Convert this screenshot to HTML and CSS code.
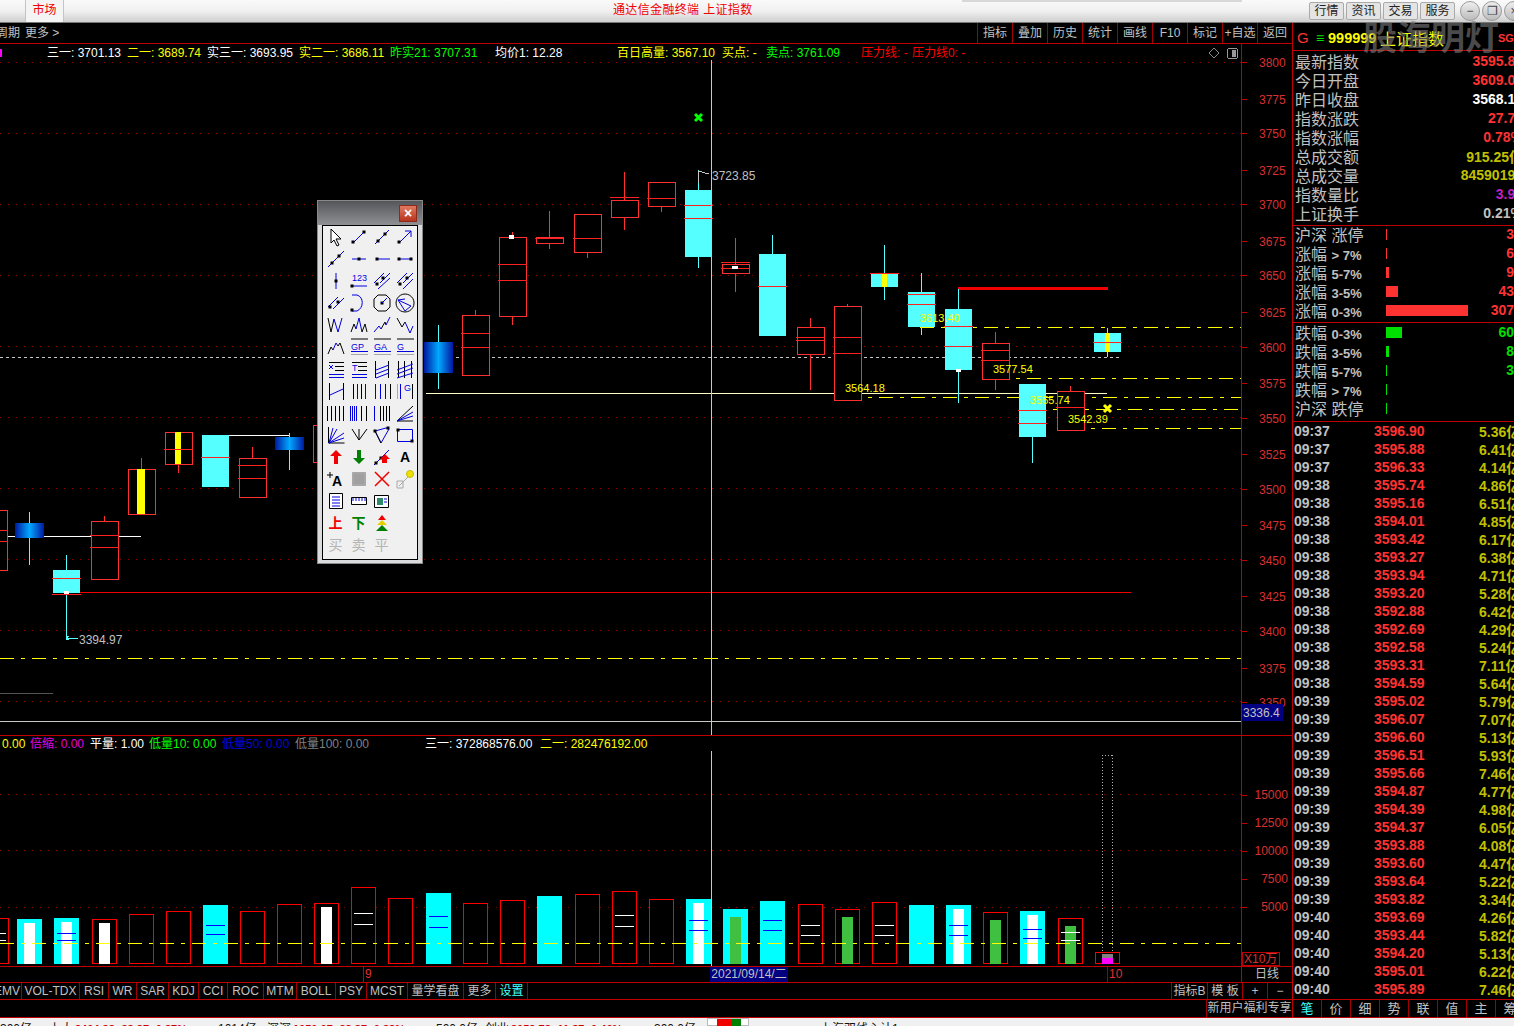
FILE: index.html
```html
<!DOCTYPE html>
<html lang="zh-CN">
<head>
    <meta charset="UTF-8">
    <title>通达信金融终端 上证指数</title>
    <link rel="stylesheet" href="styles.css">
</head>
<body>

    <header class="titlebar">
        <div class="market-tab">市场</div>
        <div class="app-title">通达信金融终端 上证指数</div>
        <div class="title-right">
            <span class="menu-btn">行情</span>
            <span class="menu-btn">资讯</span>
            <span class="menu-btn">交易</span>
            <span class="menu-btn">服务</span>
            <span class="win-btn">−</span>
            <span class="win-btn">❐</span>
            <span class="win-btn">×</span>
        </div>
    </header>

    <div class="workspace">
        <main class="left-col">
            <div class="toolbar">
                <div class="toolbar-left"><span>周期</span><span>更多 &gt;</span></div>
                <div class="toolbar-right">
                    <span>指标</span><span>叠加</span><span>历史</span><span>统计</span><span>画线</span>
                    <span>F10</span><span>标记</span><span>+自选</span><span>返回</span>
                </div>
            </div>

            <div class="chart-wrap">
                <svg class="chart" id="price-chart" viewBox="0 44 1292 691" width="1292" height="691"></svg>
                <div class="toolbox">
                    <div class="toolbox-title"><span class="toolbox-close">×</span></div>
                    <div class="toolbox-grid" id="toolbox-grid"></div>
                </div>
            </div>

            <svg class="chart" id="volume-chart" viewBox="0 735 1292 231" width="1292" height="231"></svg>

            <div class="date-row">
                <span class="seg seg-nine">9</span>
                <span class="seg seg-date">2021/09/14/二</span>
                <span class="seg seg-gap"></span>
                <span class="seg seg-ten">10</span>
                <span class="seg seg-period">日线</span>
            </div>

            <div class="tab-row">
                <div class="tabs">
                    <span>EMV</span><span>VOL-TDX</span><span>RSI</span><span>WR</span><span>SAR</span>
                    <span>KDJ</span><span>CCI</span><span>ROC</span><span>MTM</span><span>BOLL</span><span>PSY</span>
                    <span>MCST</span><span>量学看盘</span><span>更多</span><span class="tab-active">设置</span>
                </div>
                <div class="tabs-right">
                    <span class="tr-idx">指标B</span><span class="tr-tpl">模 板</span><span class="tr-pm">+</span><span class="tr-pm">−</span>
                </div>
            </div>

            <div class="promo-row"><span>新用户福利专享</span></div>
        </main>

        <aside class="right-col">
            <div class="quote-head">
                <span class="qh-g">G</span>
                <span class="qh-menu">≡</span>
                <span class="qh-code">999999</span>
                <span class="qh-name">上证指数</span>
                <span class="qh-sg">SG2</span>
            </div>

            <div class="quote-list">
                <div class="q-row"><span>最新指数</span><b class="red">3595.84</b></div>
                <div class="q-row"><span>今日开盘</span><b class="red">3609.09</b></div>
                <div class="q-row"><span>昨日收盘</span><b class="white">3568.18</b></div>
                <div class="q-row"><span>指数涨跌</span><b class="red">27.70</b></div>
                <div class="q-row"><span>指数涨幅</span><b class="red">0.78%</b></div>
                <div class="q-row"><span>总成交额</span><b class="olive">915.25亿</b></div>
                <div class="q-row"><span>总成交量</span><b class="olive">84590195</b></div>
                <div class="q-row"><span>指数量比</span><b class="purple">3.91</b></div>
                <div class="q-row"><span>上证换手</span><b class="grey">0.21%</b></div>
            </div>

            <div class="stat-list">
                <div class="s-row"><span class="s-name">沪深 涨停</span><i class="s-bar up" style="width:1px"></i><b class="red">3</b></div>
                <div class="s-row"><span class="s-name">涨幅 <em>&gt; 7%</em></span><i class="s-bar up" style="width:1px"></i><b class="red">6</b></div>
                <div class="s-row"><span class="s-name">涨幅 <em>5-7%</em></span><i class="s-bar up" style="width:3px"></i><b class="red">9</b></div>
                <div class="s-row"><span class="s-name">涨幅 <em>3-5%</em></span><i class="s-bar up" style="width:12px"></i><b class="red">43</b></div>
                <div class="s-row"><span class="s-name">涨幅 <em>0-3%</em></span><i class="s-bar up" style="width:82px"></i><b class="red">307</b></div>
            </div>

            <div class="stat-list">
                <div class="s-row"><span class="s-name">跌幅 <em>0-3%</em></span><i class="s-bar down" style="width:16px"></i><b class="green">60</b></div>
                <div class="s-row"><span class="s-name">跌幅 <em>3-5%</em></span><i class="s-bar down" style="width:3px"></i><b class="green">8</b></div>
                <div class="s-row"><span class="s-name">跌幅 <em>5-7%</em></span><i class="s-bar down" style="width:1px"></i><b class="green">3</b></div>
                <div class="s-row"><span class="s-name">跌幅 <em>&gt; 7%</em></span><i class="s-bar down" style="width:1px"></i><b class="green"></b></div>
                <div class="s-row"><span class="s-name">沪深 跌停</span><i class="s-bar down" style="width:1px"></i><b class="green"></b></div>
            </div>

            <div class="tick-list" id="tick-list"></div>

            <div class="side-tabs">
                <span class="side-active">笔</span><span>价</span><span>细</span><span>势</span>
                <span>联</span><span>值</span><span>主</span><span>筹</span>
            </div>
        </aside>
    </div>

    <footer class="statusbar">
        <span class="st-a">300亿</span><span class="st-b">上大</span><span class="st-red">3404.88 -28.87 -0.87%</span>
        <span class="st-a">1014亿</span><span class="st-b">深深</span><span class="st-red">1050.07 -28.87 -0.88%</span>
        <span class="st-a">500.0亿</span><span class="st-b">创业</span><span class="st-red">3053.78 -11.87 -0.40%</span>
        <span class="st-a">300.0亿</span>
        <span class="st-flags"><i class="f-red"></i><i class="f-green"></i></span>
        <span class="st-msg">上海双线心计1</span>
        <span class="st-icons"><i></i><i class="st-y"></i><i></i><i class="st-r"></i></span>
    </footer>

    <div class="watermark">股海明灯</div>

    <script src="script.js"></script>
</body>
</html>
```

FILE: styles.css
```css
* { margin: 0; padding: 0; box-sizing: border-box; }
html, body { width: 1514px; height: 1026px; overflow: hidden; background: #000; }
body {
    font-family: "Liberation Sans", "Noto Sans CJK SC", sans-serif;
    font-size: 12px; color: #c0c0c0; position: relative;
    display: flex; flex-direction: column;
}

/* title bar */
.titlebar {
    height: 23px; flex: none; display: flex; align-items: center; position: relative;
    background: linear-gradient(#fafafa, #f0f0f0 50%, #cfcfcf);
    border-bottom: 1px solid #777; overflow: hidden;
}
.titlebar::before {
    content: ''; position: absolute; top: 0; left: 962px; width: 280px; height: 2px;
    background: #d8d8d8;
}
.market-tab {
    width: 39px; height: 22px; margin-left: 25px; line-height: 21px; text-align: center;
    color: #f00000; background: #f4f4f4; font-size: 12px;
    border-left: 1px solid #c4c4c4; border-right: 1px solid #c4c4c4;
}
.app-title { position: absolute; left: 613px; top: 3px; color: #f00000; line-height: 15px; letter-spacing: 0.35px; }
.title-right { margin-left: auto; display: flex; align-items: center; gap: 2px; margin-right: -10px; }
.menu-btn {
    width: 35px; height: 18px; line-height: 16px; text-align: center; color: #222;
    background: #e4e4e4; border: 1px solid #aaa; border-radius: 2px;
}
.win-btn {
    width: 20px; height: 20px; border-radius: 50%; line-height: 18px; text-align: center;
    border: 1px solid #999; background: linear-gradient(#eee, #bbb); color: #444; font-size: 12px;
}
.win-btn:nth-child(5) { margin-left: 3px; }

.workspace { flex: none; height: 995px; display: flex; }
.left-col { width: 1292px; flex: none; display: flex; flex-direction: column; }
.right-col {
    width: 222px; flex: none; border-left: 1px solid #c00000;
    display: flex; flex-direction: column; overflow: hidden;
}

/* toolbar */
.toolbar {
    height: 21px; flex: none; display: flex; justify-content: space-between;
    border-bottom: 1px solid #c00000;
}
.toolbar-left { display: flex; gap: 5px; line-height: 20px; margin-left: -4px; }
.toolbar-right { display: flex; }
.toolbar-right span {
    width: 35px; text-align: center; line-height: 20px; border-left: 1px solid #a00000;
}

/* charts */
.chart { display: block; flex: none; shape-rendering: crispEdges; }
.chart text { font-family: "Liberation Sans", "Noto Sans CJK SC", sans-serif; font-size: 12px; shape-rendering: auto; }
.chart text.small { font-size: 11px; }
.chart-wrap { position: relative; height: 691px; flex: none; }

/* drawing tools palette */
.toolbox {
    position: absolute; left: 317px; top: 156px; width: 106px; height: 364px;
    background: #d9dbdd; border: 1px solid #8a8a8a; padding: 0 4px 3px;
    display: flex; flex-direction: column;
}
.toolbox-title {
    height: 24px; margin: 0 -4px; flex: none; position: relative;
    background: linear-gradient(#54565a, #8f9194);
}
.toolbox-close {
    position: absolute; right: 5px; top: 4px; width: 18px; height: 17px;
    background: linear-gradient(#e07a60, #b8331e); border: 1px solid #8c2a1a;
    color: #fff; font-size: 14px; font-weight: bold; line-height: 14px; text-align: center;
}
.toolbox-grid {
    flex: 1; background: #f0f0f0; border: 1px solid #000; display: grid;
    grid-template-columns: repeat(4, 23px); grid-auto-rows: 22px;
    justify-content: center; justify-items: center; align-items: center;
}
.tool { width: 20px; height: 20px; display: block; overflow: visible; }
.tool .b { stroke: #0000e0; fill: none; }
.tool .k { stroke: #000; fill: none; }
.tool .n { stroke: #a8a8a8; fill: none; }
.tool .w { stroke: #000; fill: #fff; }
.tool .d { fill: #000; }
.tool text { font-family: "Liberation Sans", sans-serif; font-size: 9px; fill: #0000e0; }
.tool text.big { font-size: 14px; font-weight: bold; fill: #000; }
.tool-char { font-size: 14px; line-height: 20px; color: #b4b4b4; }
.tool-char.c-red { color: #f00000; font-weight: bold; }
.tool-char.c-green { color: #008000; font-weight: bold; }

/* date axis row */
.date-row { height: 16px; flex: none; display: flex; border-top: 1px solid #c00000; line-height: 15px; color: #e03030; }
.seg { display: block; height: 15px; }
.seg-nine { margin-left: 363px; width: 347px; border-left: 1px solid #c00000; padding-left: 1px; }
.seg-date { width: 78px; background: #000080; color: #c0c0c0; white-space: nowrap; text-align: center; }
.seg-gap { width: 319px; }
.seg-ten { width: 134px; border-left: 1px solid #a00000; padding-left: 1px; }
.seg-period { width: 51px; border-left: 1px solid #c00000; color: #c0c0c0; text-align: center; }

/* formula tabs */
.tab-row {
    height: 17px; flex: none; display: flex; justify-content: space-between;
    border-top: 1px solid #c00000; line-height: 16px;
}
.tabs {
    display: grid; margin-left: -7px;
    grid-template-columns: 29px 58px 29px 28px 32px 30px 29px 36px 33px 39px 31px 41px 56px 32px 32px;
}
.tabs span { text-align: center; border-right: 1px solid #a00000; white-space: nowrap; }
.tabs .tab-active { color: #40ffff; }
.tabs-right { display: flex; }
.tabs-right span { text-align: center; border-left: 1px solid #a00000; }
.tr-idx { width: 36px; }
.tr-tpl { width: 35px; }
.tr-pm { width: 25px; }

.promo-row { height: 19px; flex: none; border-top: 1px solid #c00000; border-bottom: 1px solid #c00000; text-align: right; line-height: 17px; }
.promo-row span { display: inline-block; width: 86px; text-align: center; border-left: 1px solid #a00000; }

/* quote panel */
.quote-head {
    height: 28px; flex: none; display: flex; align-items: center;
    padding-top: 2px; border-bottom: 1px solid #c00000; white-space: nowrap;
}
.quote-head span { flex: none; }
.qh-g { color: #ff3232; font-size: 15px; margin-left: 4px; width: 19px; }
.qh-menu { color: #00e000; width: 12px; font-size: 14px; }
.qh-code { color: #ffff00; font-weight: bold; font-size: 14.5px; width: 52px; }
.qh-name { color: #ffff00; font-size: 16px; }
.qh-sg { color: #ff3232; font-weight: bold; font-size: 11px; margin-left: 54px; }

.quote-list { flex: none; border-bottom: 1px solid #c00000; padding-bottom: 3px; }
.q-row, .s-row { height: 19px; display: flex; align-items: center; font-size: 16px; padding-left: 2px; white-space: nowrap; }
.q-row { justify-content: space-between; margin-right: -9px; }
.s-row { padding-bottom: 3px; }
.q-row b, .s-row b, .tick b { font-size: 14px; }
.stat-list { flex: none; border-bottom: 1px solid #c00000; height: 97px; }
.stat-list + .stat-list { height: 99px; padding-top: 1px; }
.s-name { width: 91px; flex: none; }
.s-name em { font-style: normal; font-weight: bold; font-size: 13px; }
.s-bar { display: block; height: 11px; flex: none; }
.s-bar.up { background: #ff3232; }
.s-bar.down { background: #00e000; }
.s-row b { margin-left: auto; }

.red { color: #ff3232; }
.white { color: #fff; }
.olive { color: #c0c000; }
.purple { color: #c020c0; }
.grey { color: #c0c0c0; }
.green { color: #00e000; }

.tick-list { flex: none; height: 577px; overflow: hidden; }
.tick { height: 18px; display: flex; align-items: center; white-space: nowrap; padding: 0 0 1px 1px; }
.tick > * { flex: none; }
.tick .t-time { width: 80px; font-weight: bold; font-size: 14px; color: #c0c0c0; }
.tick .t-price { width: 105px; color: #ff3232; }
.tick .t-vol { color: #c0c000; }

.side-tabs { height: 19px; flex: none; display: flex; border-bottom: 1px solid #c00000; border-top: 1px solid #c00000; }
.side-tabs span { width: 29px; flex: none; text-align: center; line-height: 17px; border-right: 1px solid #a00000; font-size: 13px; }
.side-tabs .side-active { color: #40ffff; }

/* status bar, cut by the window edge */
.statusbar {
    height: 8px; flex: none; background: #f0f0f0; color: #111; overflow: hidden;
    display: flex; align-items: flex-start; line-height: 15px; white-space: nowrap;
    position: relative; padding-top: 4px;
}
.statusbar span { display: block; flex: none; }
.st-a { width: 49px; }
.st-b { width: 26px; }
.st-red { width: 143px; color: #d00000; font-weight: bold; font-size: 11px; }
.st-flags { position: absolute; left: 707px; top: 0; width: 42px; height: 8px; background: #fff; border: 1px solid #bbb; padding-left: 9px; }
.st-flags i { display: inline-block; height: 8px; vertical-align: top; }
.f-red { width: 14px; background: #f00000; }
.f-green { width: 10px; background: #008000; }
.st-msg { position: absolute; left: 820px; top: 4px; }
.st-icons { position: absolute; right: 6px; top: 2px; display: flex; gap: 8px; }
.st-icons i { width: 13px; height: 8px; background: #777; }
.st-icons .st-y { background: #e0c000; border-radius: 50%; }
.st-icons .st-r { background: #d00000; }

.watermark {
    position: absolute; left: 1363px; top: 11px; font-size: 34px; font-weight: bold;
    color: rgba(125, 125, 125, 0.6); pointer-events: none; white-space: nowrap;
}
```

FILE: script.js
```js
// price chart, volume bars, tick list and palette icons are drawn from the data below

const RED = "#ff3030", CYAN = "#55ffff", YEL = "#ffff00";

function line(x1, y1, x2, y2, color, extra) {
    return `<line x1="${x1}" y1="${y1}" x2="${x2}" y2="${y2}" stroke="${color}" ${extra || ""}/>`;
}
function rect(x, y, w, h, fill, stroke) {
    return `<rect x="${x}" y="${y}" width="${w}" height="${h}" fill="${fill}" stroke="${stroke || "none"}"/>`;
}
function text(x, y, s, color, cls) {
    return `<text x="${x}" y="${y}" fill="${color}" class="${cls || ""}">${s}</text>`;
}

// ---------- price chart ----------
let price = `<defs><linearGradient id="blue-bar"><stop offset="0" stop-color="#0018a0"/><stop offset="0.5" stop-color="#00a8ff"/><stop offset="1" stop-color="#0018a0"/></linearGradient></defs>`;

// grid
[62, 133, 204, 275, 346, 417, 488, 559, 630, 701].forEach(y => {
    price += line(0, y + 0.5, 1242, y + 0.5, "#900000", 'stroke-dasharray="1 7"');
});

// long lines under the candles
price += line(0, 357.5, 1120, 357.5, "#c8c8c8", 'stroke-dasharray="3 3"');
price += line(426, 393.5, 1107, 393.5, "#ffffc8");
price += line(53, 592.5, 1131, 592.5, "#f00000");
price += line(958, 288, 1108, 288, "#f00000", 'stroke-width="3"');
price += line(0, 536.5, 141, 536.5, "#ffffff");
price += line(215, 435.5, 290, 435.5, "#ffffff");
price += line(0, 693.5, 53, 693.5, "#555555");
const dashDot = 'stroke-dasharray="14 7 4 7"';
[[920, 327], [995, 378], [847, 397], [1032, 409], [1070, 428], [0, 658]].forEach(d => {
    price += line(d[0], d[1] + 0.5, 1242, d[1] + 0.5, YEL, dashDot);
});

// x, wick top, wick bottom, body top, body bottom, kind, cross lines, centre width
const candles = [
    [-7, 500, 570, 510, 570, "r", [530, 541]],
    [29, 512, 565, 523, 538, "b", []],
    [66, 555, 640, 570, 593, "c", [578, 594]],
    [104, 516, 579, 521, 579, "r", [535, 547]],
    [141, 458, 514, 469, 514, "r", [], 8],
    [178, 432, 473, 432, 464, "r", [449], 6],
    [215, 435, 487, 435, 487, "c", [457]],
    [252, 447, 497, 458, 497, "r", [465, 478]],
    [289, 433, 470, 437, 450, "b", []],
    [326, 425, 462, 425, 462, "r", []],
    [438, 325, 389, 342, 373, "b", []],
    [475, 310, 375, 315, 375, "r", [333, 347]],
    [512, 232, 325, 237, 316, "r", [264, 280]],
    [549, 211, 249, 237, 243, "r", [238]],
    [587, 214, 258, 214, 252, "r", [238]],
    [624, 172, 230, 200, 217, "r", [197]],
    [661, 182, 212, 182, 206, "r", [198]],
    [698, 170, 268, 190, 257, "c", [205, 218]],
    [735, 238, 292, 264, 273, "r", [262, 268]],
    [772, 235, 336, 254, 336, "c", [286]],
    [810, 318, 390, 327, 354, "r", [337, 340]],
    [847, 304, 400, 306, 400, "r", [337, 353]],
    [884, 245, 300, 273, 287, "c", [273], 5],
    [921, 273, 335, 292, 327, "c", [294, 304]],
    [958, 289, 403, 309, 370, "c", [326, 346]],
    [995, 332, 390, 343, 379, "r", [350, 360]],
    [1032, 437, 463, 384, 437, "c", [410, 423]],
    [1070, 386, 430, 391, 430, "r", [407]],
    [1107, 328, 357, 333, 352, "c", [342], 5]
];
candles.forEach(c => {
    const [x, wt, wb, t, b, kind, cross, centre] = c;
    const wick = kind === "r" ? RED : CYAN;
    price += line(x + 0.5, wt, x + 0.5, wb, wick);
    if (kind === "r") price += rect(x - 13 + 0.5, t + 0.5, 27, b - t, "#000", RED);
    if (kind === "c") price += rect(x - 13, t, 27, b - t, CYAN);
    if (kind === "b") price += rect(x - 14, t, 29, b - t, "url(#blue-bar)");
    if (centre) price += rect(x - Math.floor(centre / 2), t, centre, b - t, YEL);
    cross.forEach(y => { price += line(x - 14, y + 0.5, x + 15, y + 0.5, "#ff2020"); });
});

// markers
price += rect(509, 235, 5, 4, "#fff") + rect(64, 591, 5, 3, "#fff") + rect(956, 369, 5, 3, "#fff") + rect(732, 266, 6, 3, "#fff");
price += `<path d="M695 114l7 7m0-7l-7 7" stroke="#00ff00" stroke-width="3" fill="none" shape-rendering="auto"/>`;
price += `<path d="M1104 405l7 7m0-7l-7 7" stroke="#ffff00" stroke-width="3" fill="none" shape-rendering="auto"/>`;
price += `<path d="M698 183v-12l11 3m-11-3" stroke="#c8c8c8" fill="none"/>`;
price += `<path d="M66 618v20h12m-12 0l3-2m-3 2l3 2" stroke="#55ffff" fill="none"/>`;
price += text(712, 180, "3723.85", "#c0c0c0");
price += text(79, 644, "3394.97", "#c0c0c0");
[[845, 392, "3564.18"], [920, 322, "3613.40"], [993, 373, "3577.54"], [1030, 404, "3555.74"], [1068, 423, "3542.39"]].forEach(d => {
    price += text(d[0], d[1], d[2], YEL, "small");
});
price += rect(0, 49, 2, 8, "#ff00ff");

// legend
const legend = [
    [47, "三一: 3701.13", "#fff"], [127, "二一: 3689.74", YEL], [207, "实三一: 3693.95", "#fff"],
    [299, "实二一: 3686.11", YEL], [390, "昨实21: 3707.31", "#00ff00"], [495, "均价1: 12.28", "#fff"],
    [617, "百日高量: 3567.10", YEL], [722, "买点: -", YEL], [766, "卖点: 3761.09", "#00ff00"],
    [861, "压力线: -", "#ff0000"], [912, "压力线0: -", "#ff0000"]
];
legend.forEach(d => { price += text(d[0], 57, d[1], d[2]); });
price += `<path d="M1214 48l5 5-5 5-5-5z" stroke="#888" fill="none" shape-rendering="auto"/>`;
price += `<rect x="1227.5" y="48.5" width="10" height="10" rx="2" fill="none" stroke="#999"/><rect x="1232" y="50" width="4" height="7" fill="#999"/>`;

// crosshair and axis
price += line(711.5, 60, 711.5, 735, "#c8c8c8");
price += line(0, 721.5, 1242, 721.5, "#c8c8c8");
price += line(1241.5, 44, 1241.5, 735, "#c00000");
[[3800, 62], [3775, 99], [3750, 133], [3725, 170], [3700, 204], [3675, 241], [3650, 275], [3625, 312], [3600, 347],
 [3575, 383], [3550, 418], [3525, 454], [3500, 489], [3475, 525], [3450, 560], [3425, 596], [3400, 631], [3375, 668], [3350, 702]].forEach(d => {
    price += line(1242, d[1] + 0.5, 1247, d[1] + 0.5, "#c00000");
    price += text(1259, d[1] + 5, d[0], "#d83030");
});
price += rect(1242, 704, 41, 17, "#000080") + text(1243, 717, "3336.4", "#c0c0c0");
document.getElementById("price-chart").innerHTML = price;

// ---------- volume chart ----------
let vol = "";
[794, 850, 907].forEach(y => { vol += line(0, y + 0.5, 1242, y + 0.5, "#900000", 'stroke-dasharray="1 7"'); });

// x, top, kind, centre, cross lines
const bars = [
    [-4, 918, "r", "", [933, 940]], [29, 919, "c", "w", []], [66, 918, "c", "w", [933, 940]], [104, 919, "r", "w", []],
    [141, 914, "r", "", []], [178, 911, "r", "", []], [215, 905, "c", "", [925, 934]], [252, 911, "r", "", []],
    [289, 904, "r", "", []], [326, 903, "r", "w", []], [363, 887, "r", "", [913, 924]], [400, 898, "r", "", []],
    [438, 893, "c", "", [916, 927]], [475, 903, "r", "", []], [512, 900, "r", "", []], [549, 896, "c", "", []],
    [587, 894, "r", "", []], [624, 891, "r", "", [915, 926]], [661, 899, "r", "", []], [698, 899, "c", "w", [920, 930]],
    [735, 909, "c", "g", []], [772, 901, "c", "", [920, 930]], [810, 904, "r", "", [925, 935]], [847, 909, "r", "g", []],
    [884, 902, "r", "", [925, 935]], [921, 905, "c", "", []], [958, 905, "c", "w", [925, 935]], [995, 912, "r", "g", []],
    [1032, 911, "c", "w", [929, 938]], [1070, 918, "r", "g", [932, 940]]
];
const floor = 963;
bars.forEach(b => {
    const [x, top, kind, centre, cross] = b;
    if (kind === "r") vol += rect(x - 12 + 0.5, top + 0.5, 24, floor - top, "#000", "#ff0000");
    else vol += rect(x - 12, top, 25, floor - top + 1, "#00ffff");
    if (centre === "w") vol += rect(x - 5, top + 4, 11, floor - top - 3, "#fff");
    if (centre === "g") vol += rect(x - 5, top + 8, 11, floor - top - 7, "#40c040");
    cross.forEach(y => {
        vol += line(x - 9, y + 0.5, x + 10, y + 0.5, kind === "c" ? "#0000ff" : "#fff");
    });
});
vol += line(0, 943.5, 1242, 943.5, YEL, dashDot);

// the last, still open bar
vol += line(1102.5, 755, 1102.5, 952, "#b0b0b0", 'stroke-dasharray="1 2"');
vol += line(1112.5, 755, 1112.5, 952, "#b0b0b0", 'stroke-dasharray="1 2"');
vol += line(1102, 755.5, 1113, 755.5, "#b0b0b0", 'stroke-dasharray="1 2"');
vol += rect(1095.5, 952.5, 24, 11, "#000", "#ff0000") + rect(1102, 954, 11, 5, "#808080") + rect(1102, 958, 11, 6, "#ff00ff");

// second legend
[[2, "0.00", YEL], [30, "倍缩: 0.00", "#e000e0"], [90, "平量: 1.00", "#fff"], [149, "低量10: 0.00", "#00ff00"],
 [222, "低量50: 0.00", "#0000e0"], [295, "低量100: 0.00", "#808080"], [425, "三一: 372868576.00", "#fff"],
 [540, "二一: 282476192.00", YEL]].forEach(d => { vol += text(d[0], 748, d[1], d[2]); });

vol += line(711.5, 751, 711.5, 966, "#c8c8c8");
vol += line(0, 735.5, 1292, 735.5, "#c00000");
vol += line(1241.5, 735, 1241.5, 966, "#c00000");
[[15000, 795], [12500, 823], [10000, 851], [7500, 879], [5000, 907]].forEach(d => {
    vol += line(1242, d[1] + 0.5, 1247, d[1] + 0.5, "#c00000");
    vol += text(1288 - String(d[0]).length * 6.7, d[1] + 4, d[0], "#d83030");
});
vol += rect(1242.5, 952.5, 37, 13, "#000", "#c00000") + text(1244, 963, "X10万", "#d83030");
document.getElementById("volume-chart").innerHTML = vol;

// ---------- tick list ----------
const ticks = [
    ["09:37", "3596.90", "5.36"], ["09:37", "3595.88", "6.41"], ["09:37", "3596.33", "4.14"], ["09:38", "3595.74", "4.86"],
    ["09:38", "3595.16", "6.51"], ["09:38", "3594.01", "4.85"], ["09:38", "3593.42", "6.17"], ["09:38", "3593.27", "6.38"],
    ["09:38", "3593.94", "4.71"], ["09:38", "3593.20", "5.28"], ["09:38", "3592.88", "6.42"], ["09:38", "3592.69", "4.29"],
    ["09:38", "3592.58", "5.24"], ["09:38", "3593.31", "7.11"], ["09:38", "3594.59", "5.64"], ["09:39", "3595.02", "5.79"],
    ["09:39", "3596.07", "7.07"], ["09:39", "3596.60", "5.13"], ["09:39", "3596.51", "5.93"], ["09:39", "3595.66", "7.46"],
    ["09:39", "3594.87", "4.77"], ["09:39", "3594.39", "4.98"], ["09:39", "3594.37", "6.05"], ["09:39", "3593.88", "4.08"],
    ["09:39", "3593.60", "4.47"], ["09:39", "3593.64", "5.22"], ["09:39", "3593.82", "3.34"], ["09:40", "3593.69", "4.26"],
    ["09:40", "3593.44", "5.82"], ["09:40", "3594.20", "5.13"], ["09:40", "3595.01", "6.22"], ["09:40", "3595.89", "7.46"]
];
document.getElementById("tick-list").innerHTML = ticks.map(t =>
    `<div class="tick"><span class="t-time">${t[0]}</span><b class="t-price">${t[1]}</b><b class="t-vol">${t[2]}亿</b></div>`
).join("");

// ---------- drawing tools ----------
const b = d => `<path class="b" d="${d}"/>`;
const k = d => `<path class="k" d="${d}"/>`;
const n = d => `<path class="n" d="${d}"/>`;
const dot = (x, y) => `<rect class="d" x="${x - 1.5}" y="${y - 1.5}" width="3" height="3"/>`;
const lbl = (x, y, s) => `<text x="${x}" y="${y}">${s}</text>`;
const fill = (d, color) => `<path d="${d}" fill="${color}"/>`;

const icons = [
    // row 1
    `<path class="w" d="M5 2v14l3-3 3 6 2-1-3-6h5z"/>`,
    b("M4 16L16 4") + dot(4, 15) + dot(15, 5),
    b("M3 17L17 3") + dot(6, 14) + dot(13, 7),
    b("M4 16L16 4M10 4h6v6") + dot(4, 15),
    // row 2
    b("M2 18L18 2") + dot(6, 14) + dot(13, 7),
    b("M3 10h14") + dot(10, 10),
    b("M5 10h13") + dot(5, 10),
    b("M4 10h12") + dot(4, 10) + dot(16, 10),
    // row 3
    b("M10 2v16") + dot(10, 10),
    lbl(3, 10, "123") + b("M3 15h15") + dot(3, 15),
    b("M2 12L12 2M8 12L18 2M6 18L18 7") + dot(5, 13) + dot(11, 7),
    b("M2 12L12 2M8 18L18 8M8 12L18 2") + dot(5, 13) + dot(12, 7),
    // row 4
    b("M2 14L12 4M7 16L18 5") + dot(4, 14) + dot(12, 9),
    b("M3 2h5c7 2 7 13 0 16H3") + dot(3, 17),
    k("M6 2h8l4 4v8l-4 4H6l-4-4V6z") + dot(10, 10) + b("M10 10L15 5"),
    k("M10 1a9 9 0 1 0 .1 0z") + b("M3 7l13 6-6 5zM3 7l7-1"),
    // row 5
    k("M2 3l3 14 3-13") + b("M8 4l4 13 4-14"),
    k("M2 17l3-8 2 5") + b("M7 14l3-11 3 14") + k("M13 17l3-8 2 8"),
    b("M2 17l5-6 2 3") + k("M9 14l4-7 1 3") + b("M14 10l4-8"),
    k("M2 3l5 9 3-5") + b("M10 7l5 11 3-7"),
    // row 6
    k("M2 17l3-7 2 3") + b("M7 13l3-7 2 3") + k("M12 9l2-3 4 11"),
    k("M2 2h17") + lbl(2, 13, "GP") + b("M2 14.5h17") + n("M2 17.5h17"),
    k("M2 2h17") + lbl(2, 13, "GA") + b("M2 14.5h17") + n("M2 17.5h17"),
    k("M2 2h17") + lbl(2, 13, "G") + b("M2 14.5h17") + n("M2 17.5h17"),
    // row 7
    k("M3 3.5h15M9 7.5h9M9 11.5h9") + b("M3 15.5h15M3 18.5h15") + b("M3 6l4 4M7 6l-4 4"),
    k("M3 3.5h15M9 7.5h9M9 11.5h9") + b("M3 15.5h15M3 18.5h15") + lbl(3, 12, "T"),
    k("M3.5 2v17M16.5 2v17") + b("M4 11l13-5M4 15l13-5M4 19l13-5"),
    k("M3.5 2v17M9.5 2v17M16.5 2v17") + b("M2 11l16-6M2 15l16-6M2 19l16-5"),
    // row 8
    k("M3.5 2v17M17.5 2v17") + b("M4 14l13-6"),
    k("M4.5 3v15M12.5 3v15") + b("M8.5 3v15M16.5 3v15"),
    b("M3.5 3v15M8.5 3v15M13.5 3v15") + k("M18.5 3v15"),
    n("M2.5 3v15") + b("M5.5 3v15") + lbl(9, 10, "G") + k("M17.5 3v15"),
    // row 9
    k("M1.5 3v15M5.5 3v15M9.5 3v15M13.5 3v15M17.5 3v15"),
    b("M1.5 3v15M3.5 3v15M5.5 3v15M7.5 3v15") + k("M12.5 3v15M17.5 3v15"),
    b("M2.5 3v15") + k("M8.5 3v15M11.5 3v15M14.5 3v15M17.5 3v15"),
    k("M2 18L18 3M2 18h16") + b("M2 18l16-9M2 18l16-5"),
    // row 10
    k("M2.5 2v16h16") + b("M3 18L11 4M3 18L18 8M3 18l15-5M3 18L7 3"),
    k("M3 4l7 11 8-11M10 4v11"),
    b("M3 6l11-3 3 1-8 14z") + k("M3 6l6 12") + dot(3, 6) + dot(16, 3),
    b("M2.5 4.5h15v12h-15z") + dot(3, 5) + dot(17, 16),
    // row 11
    fill("M10 3l6 6h-4v8H8V9H4z", "#f00000"),
    fill("M10 17l6-6h-4V3H8v8H4z", "#008000"),
    b("M2 18L17 3") + dot(4, 16) + dot(9, 11) + fill("M13 7l5 5h-3v4h-5v-4H8z", "#f00000"),
    `<text class="big" x="5" y="15">A</text>`,
    // row 12
    `<text class="big" x="6" y="17">A</text>` + k("M4 3v6M1 6h6"),
    `<path d="M3.5 3.5h13v13h-13z" fill="#a8a8a8" stroke="#a8a8a8"/><path d="M5 5h10v10H5z" fill="#a0a0a0"/>`,
    `<path d="M3 3l14 14M17 3L3 17" stroke="#f00000" stroke-width="1.5"/>`,
    n("M2 12h6v7H2zM4 17L16 5") + `<circle cx="15" cy="5" r="3.5" fill="#f0e000" stroke="#c0c000"/>`,
    // row 13
    `<path d="M3.5 2.5h13v15h-13z" fill="#fff" stroke="#000"/>` + b("M6 6h8M6 9h8M6 12h8M6 15h8"),
    `<path d="M2.5 6.5h15v7h-15z" fill="#fff" stroke="#000"/>` + b("M4 7v3M7 7v3M10 7v3M13 7v3M16 7v3"),
    `<path d="M2.5 4.5h14v12h-14z" fill="#fff" stroke="#000"/><path d="M5 7h6v7H5z" fill="#2a8a6a"/>` + b("M12 8h3M12 11h3"),
    ""
];

let toolbox = icons.map(s => `<svg class="tool" viewBox="0 0 20 20">${s}</svg>`).join("");
toolbox += `<span class="tool-char c-red">上</span><span class="tool-char c-green">下</span>`;
toolbox += `<svg class="tool" viewBox="0 0 20 20">${fill("M10 2l4 5H6z", "#f00000")}${fill("M10 7l5 5H5z", "#e8d000")}${fill("M10 12l6 6H4z", "#008000")}</svg><span></span>`;
toolbox += `<span class="tool-char">买</span><span class="tool-char">卖</span><span class="tool-char">平</span><span></span>`;
document.getElementById("toolbox-grid").innerHTML = toolbox;
```
